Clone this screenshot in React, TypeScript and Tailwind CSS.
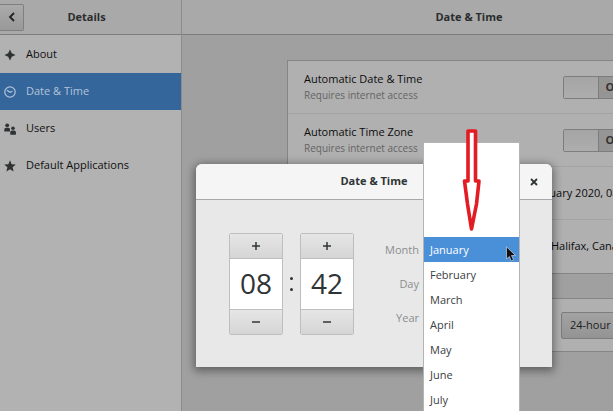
import { useState } from 'react';

const PANELS = [
  { name: 'About', icon: 'about' },
  { name: 'Date & Time', icon: 'clock' },
  { name: 'Users', icon: 'users' },
  { name: 'Default Applications', icon: 'star' },
];

const MONTHS = ['January', 'February', 'March', 'April', 'May', 'June', 'July'];

function PanelIcon({ name }: { name: string }) {
  return (
    <svg viewBox="0 0 12 12" className="size-3 shrink-0" fill="currentColor" aria-hidden="true">
      {name === 'about' && <path d="M6 .5 7.8 4.2 11.5 6 7.8 7.8 6 11.5 4.2 7.8.5 6 4.2 4.2Z" />}
      {name === 'clock' && (
        <g fill="none" stroke="currentColor" strokeWidth="1.2">
          <circle cx="6" cy="6" r="5.2" />
          <path d="M3 4.3 6 6.3 8.5 5.3" />
        </g>
      )}
      {name === 'users' && (
        <>
          <circle cx="3.2" cy="2.3" r="1.9" />
          <path d="M.3 8.5V6.5Q.3 4.8 2 4.8h2.5Q6 4.8 6 6.5V8.5Z" />
          <circle cx="9" cy="5.2" r="1.8" />
          <path d="M6.3 11.8V9.3Q6.3 7.5 8 7.5h2Q11.9 7.5 11.9 9.3v2.5Z" />
        </>
      )}
      {name === 'star' && <path d="M6 .3 7.6 4.2 11.8 4.5 8.6 7.2 9.6 11.5 6 9.2 2.4 11.5 3.4 7.2.2 4.5 4.4 4.2Z" />}
    </svg>
  );
}

function Sidebar() {
  return (
    <aside className="w-[182px] shrink-0 flex flex-col border-r border-[#8b8b8b] bg-[#b2b2b2]">
      <header className="h-[35px] shrink-0 flex items-center border-b border-[#7c7c7c] bg-[#a9a9a9]">
        <button
          aria-label="Back"
          className="w-6 h-[27px] flex items-center justify-center rounded-r-xs border border-l-0 border-[#7f7f7f] bg-linear-to-b from-[#aaaaaa] to-[#999999] text-[#222222]"
        >
          <svg viewBox="0 0 12 12" className="size-3" fill="none" stroke="currentColor" strokeWidth="1.8" aria-hidden="true">
            <path d="M8 2 4 6 8 10" />
          </svg>
        </button>
        <h2 className="flex-1 pr-8 text-center font-bold text-[#2a2d2e]">Details</h2>
      </header>
      <nav className="pt-px">
        {PANELS.map((panel) => {
          const active = panel.name === 'Date & Time';
          return (
            <a
              key={panel.name}
              href="#"
              className={`h-[37px] px-1 flex items-center gap-[10px] ${active ? 'bg-[#34669b] text-[#b4c4d6]' : 'text-[#2e3232]'}`}
            >
              <PanelIcon name={panel.icon} />
              <span className={active ? 'text-[#b4c4d6]' : 'text-[#101010]'}>{panel.name}</span>
            </a>
          );
        })}
      </nav>
    </aside>
  );
}

function SwitchRow({ title }: { title: string }) {
  const [on, setOn] = useState(false);
  return (
    <label className="h-[53px] px-4 flex items-center justify-between border-b border-[#a3a3a3]">
      <span className="flex flex-col">
        <span className="leading-4 text-[#0c0c0c]">{title}</span>
        <span className="text-[10px] leading-4 text-[#646464]">Requires internet access</span>
      </span>
      <span className="w-[71px] h-[23px] flex items-center rounded-xs border border-[#7d7d7d] bg-[#959595]">
        <input
          type="checkbox"
          role="switch"
          checked={on}
          onChange={() => setOn(!on)}
          className="appearance-none w-[35px] h-full border-r border-[#7d7d7d] bg-linear-to-b from-[#a5a5a5] to-[#adadad]"
        />
        <span className="flex-1 text-center font-bold text-[#333333]">OFF</span>
      </span>
    </label>
  );
}

function ValueRow({ title, value }: { title: string; value: string }) {
  return (
    <div className="h-[53px] px-4 flex items-center justify-between border-b border-[#a3a3a3] last:border-b-0 text-[#0c0c0c]">
      <span>{title}</span>
      <span>{value}</span>
    </div>
  );
}

function Settings() {
  return (
    <main className="min-w-[574px] flex-1 flex flex-col bg-[#a0a0a0]">
      <header className="h-[35px] shrink-0 flex items-center justify-center border-b border-[#7c7c7c] bg-[#a9a9a9]">
        <h1 className="font-bold text-[#2a2d2e]">Date &amp; Time</h1>
      </header>
      <div className="pt-[25px] px-[105px] flex flex-col gap-6">
        <section className="border border-[#858585] bg-[#b0b0b0]">
          <SwitchRow title="Automatic Date & Time" />
          <SwitchRow title="Automatic Time Zone" />
          <ValueRow title="Date & Time" value="8 January 2020, 08:42" />
          <ValueRow title="Time Zone" value="AST (Halifax, Canada)" />
        </section>
        <section className="h-[54px] px-4 flex items-center justify-between border border-[#858585] bg-[#b0b0b0] text-[#0c0c0c]">
          <span>Time Format</span>
          <button className="w-[73px] h-[27px] pl-2 text-left rounded-xs border border-[#7d7d7d] bg-linear-to-b from-[#a2a2a2] to-[#949494] text-[#222222]">
            24-hour
          </button>
        </section>
      </div>
    </main>
  );
}

function TimeSpinner({ label, initial, max }: { label: string; initial: number; max: number }) {
  const [value, setValue] = useState(initial);
  const step = (by: number) => setValue((value + by + max) % max);
  return (
    <div className="w-[54px] flex flex-col rounded-xs border border-[#bebebe] bg-white text-[#2e3436] overflow-hidden">
      <button
        aria-label={`Increase ${label}`}
        onClick={() => step(1)}
        className="h-[25px] flex items-center justify-center border-b border-[#bebebe] bg-linear-to-b from-[#e6e6e6] to-[#d5d5d5]"
      >
        <svg viewBox="0 0 8 8" className="size-2" stroke="currentColor" strokeWidth="1.5" aria-hidden="true">
          <path d="M0 4H8M4 0V8" />
        </svg>
      </button>
      <input
        aria-label={label}
        value={String(value).padStart(2, '0')}
        onChange={(e) => setValue(Number(e.target.value) % max || 0)}
        className="w-full h-[50px] pb-0.5 text-center text-[28px] outline-none"
      />
      <button
        aria-label={`Decrease ${label}`}
        onClick={() => step(-1)}
        className="h-[25px] flex items-center justify-center border-t border-[#bebebe] bg-linear-to-b from-[#e6e6e6] to-[#d5d5d5]"
      >
        <svg viewBox="0 0 8 8" className="size-2" stroke="currentColor" strokeWidth="1.5" aria-hidden="true">
          <path d="M0 4H8" />
        </svg>
      </button>
    </div>
  );
}

function MonthMenu() {
  const [month, setMonth] = useState('January');
  return (
    <div
      role="listbox"
      aria-labelledby="month-label"
      className="absolute left-[227px] -top-[22px] w-[97px] h-[300px] pt-[94px] overflow-hidden border border-[#b4b4b4] bg-white"
    >
      {MONTHS.map((name) => (
        <button
          key={name}
          role="option"
          aria-selected={name === month}
          onClick={() => setMonth(name)}
          className={`block w-full h-[25px] pl-[6px] pt-0.5 text-left ${
            name === month ? 'bg-[#4a90d9] text-white' : 'text-[#3b4042]'
          }`}
        >
          {name}
        </button>
      ))}
    </div>
  );
}

function DateTimeDialog() {
  return (
    <div
      role="dialog"
      aria-label="Date & Time"
      className="absolute left-[196px] top-[164px] w-[356px] rounded-t-md bg-[#e8e8e8] shadow-[0_2px_8px_2px_rgba(0,0,0,0.4)]"
    >
      <header className="h-9 pr-3 flex items-center rounded-t-md border-b border-[#a8a8a8] bg-[#f5f5f5] text-[#2e3436]">
        <h2 className="flex-1 pl-6 text-center font-bold">Date &amp; Time</h2>
        <button aria-label="Close" className="size-3 flex items-center justify-center">
          <svg viewBox="0 0 8 8" className="size-2" stroke="currentColor" strokeWidth="1.8" aria-hidden="true">
            <path d="M1 1 7 7M7 1 1 7" />
          </svg>
        </button>
      </header>
      <div className="pl-[33px] pt-[33px] pb-8 flex">
        <TimeSpinner label="Hour" initial={8} max={24} />
        <span className="w-[17px] flex flex-col items-center justify-center gap-2">
          <span className="size-[3px] rounded-full bg-[#2e3436]" />
          <span className="size-[3px] rounded-full bg-[#2e3436]" />
        </span>
        <TimeSpinner label="Minute" initial={42} max={60} />
        <div className="w-[65px] flex flex-col text-right text-[#8b8e8f]">
          <span id="month-label" className="h-[34px] leading-[34px]">Month</span>
          <span className="h-[34px] leading-[34px]">Day</span>
          <span className="h-[34px] leading-[34px]">Year</span>
        </div>
      </div>
      <MonthMenu />
    </div>
  );
}

export default function App() {
  return (
    <div className="relative h-screen flex overflow-hidden font-['Open_Sans',sans-serif] text-[11px]">
      <Sidebar />
      <Settings />
      <DateTimeDialog />
      {/* pointer to the open month list */}
      <svg viewBox="0 0 20 106" className="absolute left-[462px] top-[128px] w-5 h-[106px]" fill="white" stroke="#e31b23" strokeWidth="3.6" strokeLinejoin="round" aria-hidden="true">
        <path d="M6 3H13.500V53H17L14.500 76 9.500 101 5.500 76 2.500 53H6Z" />
      </svg>
      <svg viewBox="0 0 10 16" className="absolute left-[506px] top-[246px] w-[10px] h-4" fill="#111111" stroke="#c9d6e4" strokeWidth="0.7" aria-hidden="true">
        <path d="M.5.8V13L3.400 10.500 5.300 15 7.500 14 5.500 9.500H9.500Z" />
      </svg>
    </div>
  );
}
